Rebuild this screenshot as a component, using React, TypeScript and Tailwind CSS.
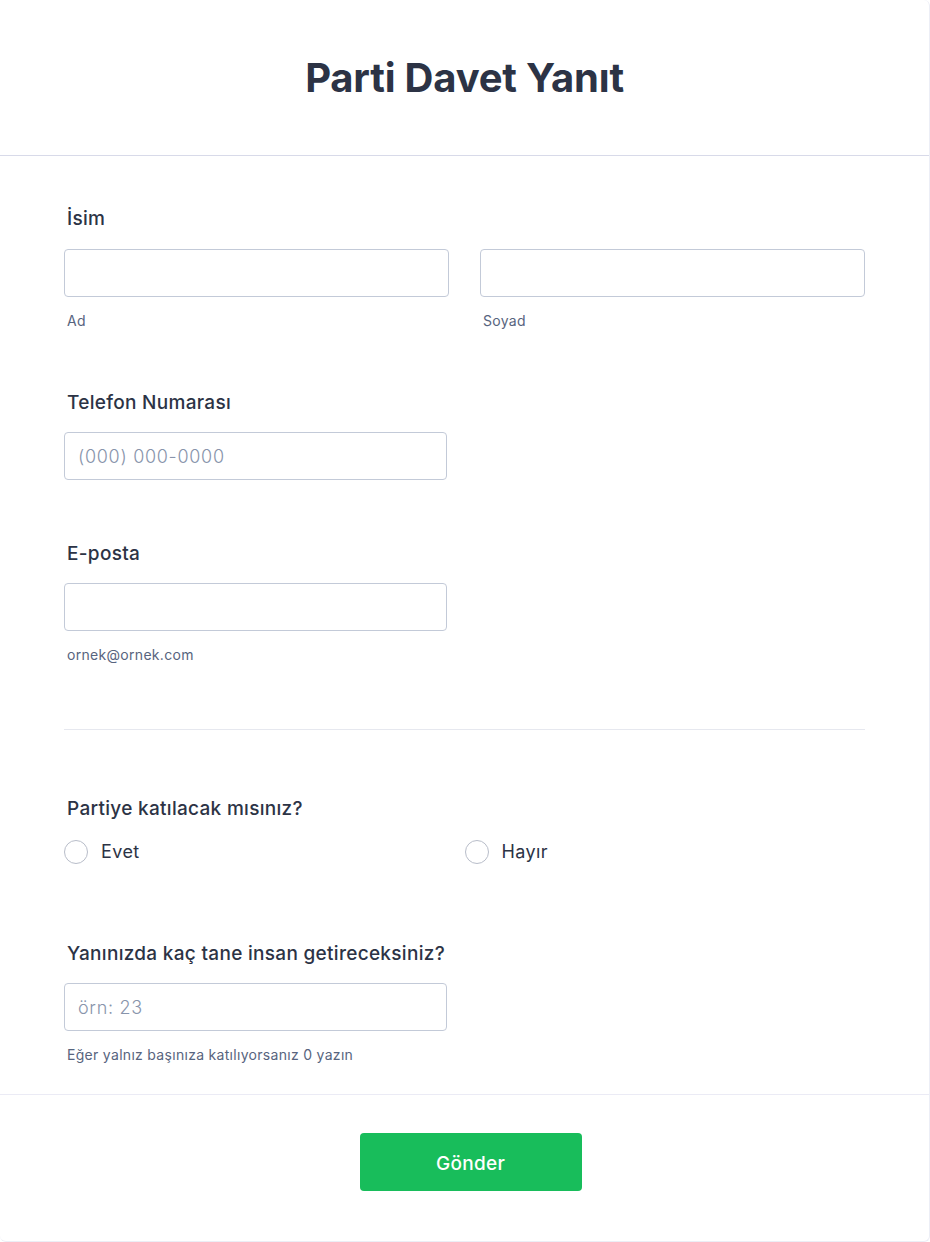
import React from "react";

const font = { fontFamily: "Inter, 'Noto Sans', sans-serif" };

function Label({ children }: { children: React.ReactNode }) {
  return <div className="px-[3px] text-[19px] leading-6 font-medium text-[#2c3345] tracking-[0.3px]">{children}</div>;
}

function Sub({ children }: { children: React.ReactNode }) {
  return <div className="px-[3px] text-[14px] leading-5 text-[#57647e] tracking-[0.3px]">{children}</div>;
}

function Input({ placeholder, w = "w-[383px]" }: { placeholder?: string; w?: string }) {
  return (
    <input
      placeholder={placeholder}
      className={`${w} h-[48px] rounded-[4px] border border-[#c3cad8] bg-white px-[13px] text-[18px] font-light tracking-[0.7px] text-[#2c3345] placeholder:text-[#8894ab] outline-none`}
    />
  );
}

function Radio({ label }: { label: string }) {
  return (
    <div className="flex items-center gap-[13px]">
      <div className="w-[24px] h-[24px] rounded-full border border-[#b8bdc9] bg-white" />
      <span className="text-[18px] leading-6 text-[#2c3345] tracking-[0.4px]">{label}</span>
    </div>
  );
}

export default function App() {
  return (
    <div className="w-[930px] h-[1242px] bg-white" style={font}>
      <div className="w-full h-full rounded-[6px] border-r border-b border-[#eceef6] flex flex-col">
        <div className="h-[156px] border-b border-[#d8dae9] flex items-center justify-center">
          <h1 className="text-[40px] leading-[48px] font-bold text-[#2c3345] tracking-[-0.2px]">Parti Davet Yanıt</h1>
        </div>

        <div className="px-[64px] pr-[64px] flex flex-col">
          <div className="pt-[51px]">
            <Label>İsim</Label>
            <div className="mt-[18px] grid grid-cols-2 gap-[31px]">
              <div className="flex flex-col">
                <Input w="w-full" />
                <div className="mt-[14px]"><Sub>Ad</Sub></div>
              </div>
              <div className="flex flex-col">
                <Input w="w-full" />
                <div className="mt-[14px]"><Sub>Soyad</Sub></div>
              </div>
            </div>
          </div>

          <div className="pt-[60px]">
            <Label>Telefon Numarası</Label>
            <div className="mt-[17px]"><Input placeholder="(000) 000-0000" /></div>
          </div>

          <div className="pt-[62px]">
            <Label>E-posta</Label>
            <div className="mt-[17px]"><Input /></div>
            <div className="mt-[14px]"><Sub>ornek@ornek.com</Sub></div>
          </div>

          <div className="mt-[64px] h-px w-full bg-[#e6e8ef]" />

          <div className="pt-[67px]">
            <Label>Partiye katılacak mısınız?</Label>
            <div className="mt-[19px] grid grid-cols-2">
              <Radio label="Evet" />
              <Radio label="Hayır" />
            </div>
          </div>

          <div className="pt-[78px]">
            <Label>Yanınızda kaç tane insan getireceksiniz?</Label>
            <div className="mt-[17px]"><Input placeholder="örn: 23" /></div>
            <div className="mt-[14px]"><Sub>Eğer yalnız başınıza katılıyorsanız 0 yazın</Sub></div>
          </div>
        </div>

        <div className="mt-[29px] border-t border-[#ebebf5] flex justify-center pt-[38px] pl-[12px]">
          <button className="w-[222px] h-[58px] rounded-[4px] bg-[#18bd5b] text-white text-[19px] tracking-[0.3px] font-medium pt-[4px]">
            Gönder
          </button>
        </div>
      </div>
    </div>
  );
}
